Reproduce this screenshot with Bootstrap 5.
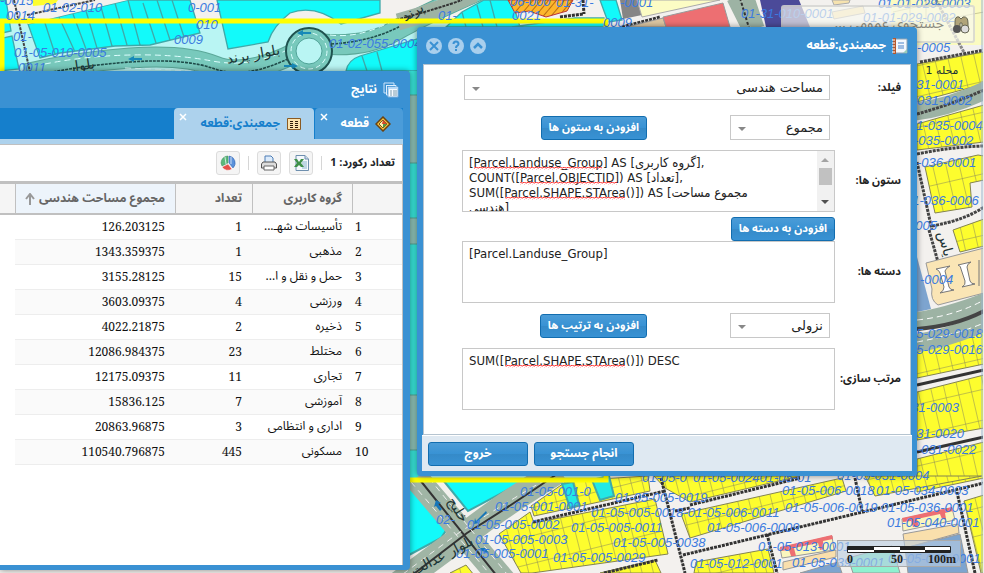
<!DOCTYPE html>
<html lang="fa">
<head>
<meta charset="utf-8">
<meta name="viewport" content="width=device-width, initial-scale=1">
<title>جمعبندی قطعه</title>
<link href="https://cdn.jsdelivr.net/npm/bootstrap@5.3.0/dist/css/bootstrap.min.css" rel="stylesheet">
<style>
:root{--frame:#3a91d3;--edge:#157fcc;--pale:#add2ed;--rule:#c0c0c0}
body{font-family:"Noto Sans Arabic","DejaVu Sans Condensed","DejaVu Sans",sans-serif;font-size:12px;line-height:16px;min-height:100vh;overflow:hidden;background:#f3f1ee}
svg{display:block}
.map-canvas{position:absolute;inset:0;width:100%;height:100%}
.map-code{font:italic 13px "Liberation Sans",sans-serif;fill:#3b7be0}
.map-name{font:14px "DejaVu Sans",sans-serif;fill:#1c3434}
.win{position:absolute;background:var(--frame);box-shadow:0 0 6px rgba(0,0,0,.45)}
.results{left:0;top:71px;bottom:3px;width:410px;padding:0 7px 5px 0;border-radius:0 4px 4px 0;z-index:2}
.summary{left:417px;top:27px;width:500px;padding:0 5px 5px;border-radius:4px;z-index:3}
.win-title{height:37px;color:#fff;font-weight:700;gap:6px}
.tool-btn{border:0;background:none;padding:0;width:16px;height:16px}
.tabstrip{background:#157fcc;height:31px}
.tab-btn{border:0;position:relative;color:#fff;font-weight:700;background:#4b9cd9;padding:0 12px 0 0;border-radius:4px 4px 0 0;height:31px;gap:6px}
.tab-btn.tab-on{background:var(--pale);color:#157fcc;margin-right:1px}
.tab-parcel{width:88px}.tab-sum{width:140px}
.tab-x{position:absolute;left:5px;top:5px}
.tab-base{height:6px;background:var(--pale);border-bottom:1px solid var(--rule)}
.results-body{background:#fff;border-right:1px solid var(--rule)}
.toolbar-line{height:36px;padding-right:7px;font-size:11px}
.icon-btn{width:24px;height:24px;border:1px solid #dcdcdc;border-radius:3px;background:#f5f5f5;padding:0}
.tb-sep{width:1px;height:14px;background:#d6d6d6}
.grid{table-layout:fixed;width:100%;border-collapse:separate;border-spacing:0}
.grid th{height:34px;border-top:3px solid var(--rule);border-bottom:2px solid var(--rule);border-left:1px solid var(--rule);background:#f5f5f5;color:#666;padding:0 10px;font-weight:700;white-space:nowrap}
.grid th:last-child{border-left:0}
.grid th.sorted{background:#edf4fb}
.grid td{height:25px;padding:0 10px;border-bottom:1px solid #ededed;overflow:hidden;white-space:nowrap;color:#111;font-size:12px}
.grid tr:nth-child(even) td{background:#fafafa}
.grid td:last-child,.grid tr:nth-child(even) td:last-child{border:0;background:#fff}
.grid td.num{font-family:"Noto Serif","Liberation Serif",serif}
.grid td.idx{direction:ltr;text-align:left;padding:0 3px}
.form-body{background:#fff;border:1px solid #b5c4d0;margin:0 1px;padding:10px 9px 24px 38px}
.line{display:grid;grid-template-columns:66px minmax(0,1fr);align-items:center}
.line label{font-weight:700;font-size:11px;color:#222;white-space:nowrap}
.line-inset{padding:0 5px 0 2px}
.line-columns{margin:15px 0 10px}
.line-sort{margin:10px 0}
.line-group{margin-top:5px}
.pick{height:25px;border:1px solid #c8c8c8;border-radius:0;padding:0 6px 0 24px;font:13px/22px "DejaVu Sans",sans-serif;color:#222;background:#fff url("data:image/svg+xml,%3Csvg xmlns='http://www.w3.org/2000/svg' width='8' height='4'%3E%3Cpath d='M0 0h8L4 4z' fill='%23888'/%3E%3C/svg%3E") no-repeat 7px 11px;background-size:8px 4px}
.pick-short{width:100px}
.act{height:24px;border:1px solid #126daf;border-radius:3px;color:#fff;font-weight:700;font-size:11px;line-height:16px;padding:0 7px;background:linear-gradient(#4b9cd7,#3892d4 50%,#358ac8 51%,#3892d4);white-space:nowrap}
.add-btn{margin-right:83px}
.act-foot{width:100px;font-size:12px}
.area-box{position:relative;border:1px solid #c8c8c8;height:62px;background:#fff}
.area-box textarea{border:0;border-radius:0;width:100%;height:60px;resize:none;padding:4px 6px;overflow:hidden;font:13px/15px "DejaVu Sans Condensed","DejaVu Sans",sans-serif;color:#222;direction:ltr;text-align:left;background:none;display:block;outline:0}
.area-box .squiggle{position:absolute;left:0;top:0;width:100%;height:100%;pointer-events:none}
.scroller{width:17px;background:#f1f1f1;flex:none}
.foot{background:#dfe9f2;height:36px;padding:0 6px;border-top:1px solid #fff;gap:6px}
.search-box{position:absolute;right:9px;top:5px;width:194px;height:38px;background:rgba(248,248,240,.68);border:2px solid rgba(190,190,190,.5);border-radius:3px;padding:0 3px 0 6px;z-index:1}
.search-box input{border:0;background:none;width:140px;font-size:14px;color:#777;outline:0}
.search-box input::placeholder{color:#8b8b80}
.scale-box{position:absolute;right:23px;bottom:6px;width:124px;height:27px;background:rgba(185,205,225,.6);border:1px solid #aaa;z-index:1}
.scale-box text{font:bold 12px "Liberation Serif",serif;fill:#222}
</style>
<script src="https://cdn.jsdelivr.net/npm/bootstrap@5.3.0/dist/js/bootstrap.bundle.min.js"></script>
</head>
<body class="position-relative m-0">
<svg class="map-canvas" viewBox="0 0 984 573" preserveAspectRatio="xMinYMin slice" aria-label="نقشه">
<defs>
<pattern id="lots" width="11" height="27" patternUnits="userSpaceOnUse" patternTransform="rotate(-14)"><rect width="11" height="27" fill="#fdfd2e"/><path d="M0 0H11M0 0V27" stroke="#87875a" fill="none"/></pattern>
<pattern id="lotsR" width="13" height="30" patternUnits="userSpaceOnUse" patternTransform="rotate(-13)"><rect width="13" height="30" fill="#fdfd2e"/><path d="M0 0H13M0 0V30" stroke="#87875a" fill="none"/></pattern>
<pattern id="hatch" width="6" height="6" patternUnits="userSpaceOnUse" patternTransform="rotate(40)"><rect width="6" height="6" fill="#fdb62c"/><path d="M0 0V6" stroke="#b96b10" stroke-width="2"/></pattern>
<pattern id="squig" width="4" height="3" patternUnits="userSpaceOnUse"><path d="M0 2L1 1L3 2L4 2" stroke="#f33" fill="none"/></pattern>
</defs>
<rect width="984" height="573" fill="#f3f1ee"/>
<!-- selected district -->
<rect x="0" y="21" width="606" height="459" fill="#b9f5f3"/>
<g fill="#12fafa" stroke="#3fa9a9" stroke-width="1.3">
<path d="M28 24L128 0H190L200 33L150 45L115 46L60 53L40 58ZM44 20L55 54M59 17L75 52M73 14L86 49M86 11L97 48M101 7L112 46M115 3L127 45M128 0L140 45M143 3L156 43M157 0L170 40M172 0L184 37"/>
<path d="M217 0L228 49L268 42Q273 26 290 13Q315 4 341 24L380 13V0Z"/>
<path d="M346 71Q348 60 360 56L420 38V71ZM362 56L367 71M377 52L382 71"/>
<path d="M-2 0H6L11 31L-2 34ZM-2 39L12 36L19 69L-2 71Z"/>
<path d="M446 27L462 12L484 0H512L520 27ZM462 12L466 27M477 5L483 27M490 0L497 27"/>
<path d="M512 27L575 18H604V27Z"/>
<path d="M600 0L608 22L622 20L616 0Z"/>
</g>
<path d="M0 0H10L28 24L128 0H30L24 12L14 0Z" fill="#f3f1ee"/>
<path d="M409 71H420V480H409Z" fill="#38e8dc"/><path d="M409 95h10v68h-10M409 218h10v26h-10M409 395h10v55h-10" fill="#8fc4b8" stroke="#56a697"/>
<g fill="none"><path d="M25 74Q75 62 130 58T215 66T295 53M322 44Q365 48 395 31T480 -10" stroke="#5ba899" stroke-width="21"/><path d="M25 74Q75 62 130 58T215 66T295 53M322 44Q365 48 395 31T480 -10" stroke="#78c9bc" stroke-width="19"/>
<path d="M30 77Q75 66 130 62T215 69T292 57M331 44Q365 42 390 31T480 -12" stroke="#1f4c4a" stroke-width="1.6" stroke-dasharray="3 1"/><path d="M45 64Q85 56 130 55T212 61T285 51M330 35Q355 38 382 26T450 -5M125 68Q180 70 220 73" stroke="#dff" stroke-dasharray="6 4"/></g>
<circle cx="309" cy="51" r="23" fill="#78c9bc" stroke="#1f5350" stroke-width="2"/><circle cx="309" cy="51" r="18" fill="none" stroke="#dff" stroke-dasharray="5 3"/><circle cx="309" cy="51" r="13" fill="#b9f5f3" stroke="#4fa297"/>
<path d="M14 0L30 72M27 15L95 0" stroke="#444" stroke-width="2" stroke-dasharray="3 1"/>
<path d="M128 59l6-3v2h8v2h-8v2zM297 33l6-3v2h8v2h-8v2zM298 66l-6-3v2h-8v2h8v2z" fill="#1789b8"/>
<path d="M33 0H58L55 4L33 6Z" fill="#fdfd2e"/>
<path d="M398 22Q435 12 474 -6" stroke="#9db3a4" stroke-width="17" fill="none"/><path d="M396 20Q440 8 462 0" stroke="#333" stroke-width="2" stroke-dasharray="3 1" fill="none"/>
<path d="M508 0H573L567 11L546 17L529 11L515 13Z" fill="url(#hatch)" stroke="#b33"/>
<path d="M560 17L583 14M583 0L584 14M622 27L660 17" stroke="#333" stroke-width="3" stroke-dasharray="3 1"/>
<path d="M620 0H637L642 15L623 19Z" fill="#858585"/><path d="M637 0H720L642 17Z" fill="#fcfcc4" stroke="#aaa"/>
<path d="M627 27L663 18L666 27Z" fill="#dcc6a2" stroke="#999"/><path d="M663 17L723 3L730 27H666Z" fill="#ed6f72" stroke="#999"/>
<path d="M733 -2L748 28M748 -2L758 28" stroke="#9db3a4" stroke-width="13"/><path d="M740 -2L749 28" stroke="#333" stroke-width="2" stroke-dasharray="3 2"/>
<path d="M760 0H799L810 27H766Z" fill="#4b4a99"/><path d="M832 0H850L849 3L834 5ZM832 12L863 6L865 13L834 19Z" fill="#f6e3af" stroke="#aaa"/><path d="M891 0H984V45H891Z" fill="#fbfbc0"/><path d="M936 0L967 58" stroke="#888" stroke-width="3" stroke-dasharray="3 1"/>
<path d="M893 12L984 -8M893 29L984 12M910 0V27M926 0V20" stroke="#c9c996"/>
<!-- eastern blocks -->
<g fill="url(#lotsR)" stroke="#84844f"><path d="M917 64L984 52V84L917 102Z"/><path d="M917 124L984 105V142L917 150Z"/><path d="M925 167L978 155L984 156V180L970 183L972 207L935 213Z"/><path d="M953 230L984 219V246L960 252Z"/><path d="M917 350L984 326V364L917 378Z"/><path d="M917 392L984 375V428L917 440Z"/><path d="M917 459L984 442V478L917 492Z"/></g>
<path d="M912 112Q950 108 990 88" stroke="#9db3a4" stroke-width="18" fill="none"/><g stroke="#444" stroke-width="3" stroke-dasharray="3 1" fill="none"><path d="M917 114Q950 105 984 90M917 154Q950 147 984 146M920 62L984 50M917 162L932 230M932 226Q965 220 984 207M929 230L938 262"/></g>
<path d="M926 263L984 248V293L938 305Q930 300 932 289Z" fill="#fae5b5" stroke="#999"/><path d="M917 257L931 309L917 312Z" fill="#7da4cf"/>
<path d="M910 322Q945 318 990 300M910 344Q945 340 990 320" stroke="#9db3a4" stroke-width="18" fill="none"/><path d="M917 329Q955 326 984 311" stroke="#444" stroke-width="4" fill="none"/><path d="M917 320Q955 316 984 300M917 342Q955 335 984 323" stroke="#fff" stroke-dasharray="6 4" fill="none"/>
<path d="M936 269l14-3q-4 2-5 5l4 16q1 3 5 3l-14 3q4-2 4-6l-4-14q-1-3-4-4M958 265l13-3q-4 2-4 5l3 14q1 3 5 3l-13 3q4-2 3-6l-4-12q0-3-3-4M979 260v26" fill="#fff" stroke="#777"/>
<path d="M917 385L984 370M917 452L984 437" stroke="#333" stroke-width="3"/>
<!-- southern blocks -->
<path d="M409 480L449 526L441 538L409 555ZM443 480L468 511L526 480Z" fill="#12fafa" stroke="#3fa9a9" stroke-width="2"/>
<path d="M416 478L508 586M398 584L467 533Q510 500 560 470" stroke="#a0b5a5" stroke-width="25" fill="none"/><path d="M420 480L505 586M398 586L467 533Q515 503 560 472" stroke="#333" stroke-width="2" fill="none"/><path d="M411 482L500 586M429 478L515 584M403 574L460 532Q510 500 545 480" stroke="#eee" stroke-dasharray="6 5" fill="none"/>
<path d="M436 500l-2 7 2-1 4 5 2-2-4-5 3-1zM486 511l-10 10-1-3-1 6 5-1-2-1 10-9zM475 540l4 8 6 0 4 5-7-2z" fill="#1675b8"/>
<g fill="url(#lots)" stroke="#84844f"><path d="M531 506L567 481L648 476L650 491L534 516Z"/><path d="M499 534L530 512L534 523L655 499L668 554L532 573H521Z"/><path d="M654 476H800L690 502L665 488Z"/><path d="M681 514L842 478L846 491L690 538Z"/><path d="M696 562L768 549L774 573H694Z"/><path d="M865 476H982L875 496Z"/><path d="M964 501L984 495V573H981Z"/><path d="M450 573L466 565L474 575Z"/><path d="M600 573L655 560L661 573Z"/></g>
<path d="M562 484L570 508L579 505L573 482ZM592 480L600 500L614 496L609 476Z" fill="#22e9e5" stroke="#3fa9a9" stroke-width="2"/>
<g stroke="#333" stroke-width="3" stroke-dasharray="3 1" fill="none"><path d="M533 522L665 491M661 478L685 573M604 573L658 560M683 555L984 483M690 505L800 478M675 511L690 508M855 478L862 511M767 534L777 573M957 492L975 573"/></g>
<g stroke="#999"><path d="M780 548L832 536L834 550L782 558Z" fill="#faf6bd"/><path d="M783 562L836 550V557L783 570Z" fill="#f9dfac"/><path d="M902 519L952 508L955 520L903 531Z" fill="#faf6bd"/><path d="M903 534L958 524L959 533L905 548Z" fill="#f9dfac"/><path d="M905 548L960 534L968 573H908Z" fill="#7da4cf"/><path d="M800 573L838 562L842 573Z" fill="#7da4cf"/><path d="M848 558L892 546L900 573H853Z" fill="#8ff1d0"/></g>
<path d="M780 547L832 535L833 539L823 541L824 549L820 550L818 543L794 548L796 556L791 556L789 550L781 551ZM902 518L952 507L953 511L945 513L946 519L942 519L940 514L917 519L919 526L913 527L911 521L903 522Z" fill="#ed6f72"/>
<path d="M0 21H606V28M606 476V480H409M2 21V75" fill="none" stroke="#ff0" stroke-width="5"/>
<g class="map-code">
<text x="0" y="5">-0015</text><text x="43" y="12">01-02-010</text><text x="188" y="12">0-001</text><text x="6" y="20">0014</text><text x="196" y="29">010</text><text x="13" y="41">01-</text><text x="174" y="44">0009</text><text x="14" y="57">01-05-010-0005</text><text x="18" y="72">0011</text><text x="329" y="48">01-02-055-0004</text>
<text x="438" y="20">01-</text><text x="510" y="6">06-000</text><text x="512" y="20">0021</text><text x="556" y="7">01-31-</text><text x="620" y="7">-0001</text><text x="603" y="27">0009</text><text x="741" y="18">01-31-010-0001</text><text x="878" y="8">01-01-029-0003</text><text x="863" y="22">01-01-029-0002</text>
<text x="917" y="52">-0005</text><text x="909" y="89">031-0001</text><text x="917" y="105">031-0002</text><text x="909" y="130">01-035-0004</text><text x="914" y="145">-035-0002</text><text x="917" y="167">-036-0001</text><text x="905" y="205">01-036-0006</text><text x="908" y="230">0005</text><text x="920" y="284">-0004</text><text x="909" y="338">05-029-0018</text><text x="909" y="354">05-029-0016</text><text x="904" y="412">031-0003</text><text x="909" y="438">031-0020</text><text x="917" y="454">-031-0022</text>
<text x="520" y="496">01-05-001-0</text><text x="495" y="511">01-05-001-0001</text><text x="615" y="502">01-05-005-0019</text><text x="591" y="517">01-05-005-0018-01-05-006-0011</text><text x="467" y="529">01-05-005-0002</text><text x="571" y="532">01-05-005-0011</text><text x="475" y="544">01-05-005-0003</text><text x="613" y="547">01-05-005-0038</text><text x="456" y="558">01-05-005-0001</text><text x="553" y="562">01-05-005-0029</text><text x="642" y="482">01-05-0</text>
<text x="782" y="495">01-05-006-0018</text><text x="876" y="495">01-05-034-0003</text><text x="785" y="512">01-05-006-0019</text><text x="881" y="512">01-05-036-0001</text><text x="707" y="532">01-05-006-0009</text><text x="887" y="527">01-05-040-0001</text><text x="758" y="551">01-05-013-0001</text><text x="690" y="568">01-05-012-0001</text><text x="792" y="567">01-05-039-0001</text><text x="888" y="563">01-05-060-0001</text><text x="693" y="482">01-05-002401-05-01</text><text x="837" y="480">01-05-031-0004</text><text x="436" y="524">02-</text>
</g>
<g class="map-name" text-anchor="middle"><text transform="translate(254 59) rotate(-10)">بلوار پرند</text><text transform="translate(415 16) rotate(-30)">پرند</text><text transform="translate(82 70) rotate(-8)">بلوار</text><text transform="translate(942 74)" style="font-size:11px">محله 1</text><text transform="translate(941 245) rotate(75)">یاس</text><text transform="translate(444 560) rotate(-28)">بلوار عدالت</text><text transform="translate(454 512) rotate(58)">خلیج</text></g>
<path d="M982 0V573" stroke="#9bb6cf"/><path d="M983.500 0V573" stroke="#eee"/>
</svg>

<form class="search-box d-flex align-items-center justify-content-between" dir="rtl">
<svg width="18" height="20" viewBox="0 0 18 20" aria-hidden="true"><path d="M3 8Q3 2 7 3L9 5L11 3Q16 2 16 9V15H10V9H8V15H3Z" fill="#b0a47a" stroke="#665"/><ellipse cx="5" cy="15" rx="4" ry="4" fill="#555"/><ellipse cx="13" cy="15" rx="4" ry="4" fill="#ddd" stroke="#665"/></svg>
<input type="search" placeholder="جستجوی عمومی ..." aria-label="جستجوی عمومی" class="me-2 p-0 flex-grow-1">
</form>

<div class="scale-box"><svg width="122" height="25" viewBox="0 0 122 25"><path d="M9.500 5.500H112.500V11.500H9.500Z" fill="#fff" stroke="#222"/><path d="M10 6H36V9H10ZM62 6H87V9H62ZM36 9H62V11H36ZM87 9H112V11H87Z" fill="#222"/><text x="9" y="22">0</text><text x="53" y="22">50</text><text x="90" y="22">100m</text></svg></div>

<section class="win results d-flex flex-column" dir="rtl">
<header class="win-title d-flex align-items-center pe-1">
<svg width="16" height="16" viewBox="0 0 16 16"><path d="M1 1H11V3M1 1V11H3" fill="none" stroke="#cfe5fa"/><path d="M3 3.500H13V5M3.500 3V13H5" fill="none" stroke="#dff0ff"/><path d="M5 5H15V15H5Z" fill="#f5faff" stroke="#7db0dc"/><path d="M5 5H15V7H5Z" fill="#b8d9f6"/><path d="M7 9H9M10 9H14M7 11H9M10 11H14M7 13H9M10 13H14" stroke="#7c9eb0"/></svg>
<span>نتایج</span></header>
<div class="tabstrip d-flex" role="tablist">
<button class="tab-btn tab-parcel d-flex align-items-center" role="tab" type="button"><svg width="16" height="16" viewBox="0 0 16 16"><path d="M8 1L15 8L8 15L1 8Z" fill="#f5c13c" stroke="#6b4310" stroke-width="1.500"/><path d="M8 4L12 8L8 12L4 8Z" fill="#fff2b0" stroke="#7a5522"/><path d="M8 4L12 8H7Z" fill="#d5472b"/><path d="M8 12L12 8H8Z" fill="#4f9a48"/></svg><span>قطعه</span><svg class="tab-x" width="8" height="8" viewBox="0 0 8 8"><path d="M1 1L7 7M7 1L1 7" stroke="#fff" stroke-width="1.500"/></svg></button>
<button class="tab-btn tab-on tab-sum d-flex align-items-center" role="tab" aria-selected="true" type="button"><svg width="16" height="12" viewBox="0 0 16 12"><path d="M1.500.5H14.500V11.500H1.500Z" fill="#fbe3ae" stroke="#8a5a22"/><path d="M4 3.500H7M9 3.500H12M4 5.500H7M9 5.500H12M4 7.500H7M9 7.500H12M4 9.500H7M9 9.500H12" stroke="#2d1b08"/></svg><span>جمعبندی:قطعه</span><svg class="tab-x" width="8" height="8" viewBox="0 0 8 8"><path d="M1 1L7 7M7 1L1 7" stroke="#fff" stroke-width="1.500"/></svg></button>
</div>
<div class="tab-base"></div>
<div class="results-body flex-grow-1">
<div class="toolbar-line d-flex align-items-center gap-2">
<strong>تعداد رکورد: 1</strong><span class="tb-sep"></span>
<button class="icon-btn d-flex align-items-center justify-content-center" type="button" aria-label="Excel"><svg width="16" height="16" viewBox="0 0 16 16"><path d="M3 .5H12L15.500 4V15.500H3Z" fill="#f4f8fc" stroke="#6e8fae"/><path d="M12 .5V4H15" fill="#cde" stroke="#6e8fae"/><path d="M9 7H14M9 9H14M9 11H14M9 13H14" stroke="#88b3c8"/><path d="M1 4L4 4L6 7L8 4H11L8 8L11 12H8L6 10L4 12H1L4 8Z" fill="#3e8f48"/></svg></button>
<button class="icon-btn d-flex align-items-center justify-content-center" type="button" aria-label="چاپ"><svg width="16" height="16" viewBox="0 0 16 16"><path d="M4 8V1H10L12 3V8" fill="#dcebfb" stroke="#4d7db5"/><path d="M2 7H14L15.500 9V13H.5V9Z" fill="#ddd" stroke="#555"/><path d="M3 11H13V15H3Z" fill="#fff" stroke="#666"/></svg></button>
<span class="tb-sep"></span>
<button class="icon-btn d-flex align-items-center justify-content-center" type="button" aria-label="نمودار"><svg width="16" height="16" viewBox="0 0 16 16"><path d="M8 8V1A7 7 0 0 0 1 8L2 11Z" fill="#5bb87b" stroke="#358754" stroke-width=".5"/><path d="M9 8V1A7 7 0 0 1 13 13Z" fill="#5c92db" stroke="#2b5cab" stroke-width=".5"/><path d="M8 9L12 14A7 7 0 0 1 2 12Z" fill="#e64f49" stroke="#fff" stroke-width=".5"/><path d="M11 2V9M5 2L6 9" stroke="#fff" stroke-width=".7"/></svg></button>
</div>
<table class="grid">
<colgroup><col style="width:50px"><col style="width:100px"><col style="width:77px"><col style="width:160px"><col></colgroup>
<thead><tr><th></th><th>گروه کاربری</th><th>تعداد</th><th class="sorted"><span class="d-flex align-items-center gap-1">مجموع مساحت هندسی<svg class="flex-shrink-0" width="10" height="12" viewBox="0 0 10 12"><path d="M5 12V2M1 6L5 1L9 6" fill="none" stroke="#999" stroke-width="2"/></svg></span></th><th class="p-0"></th></tr></thead>
<tbody>
<tr><td class="num idx">1</td><td>تأسیسات شهـ...</td><td class="num">1</td><td class="num">126.203125</td><td></td></tr>
<tr><td class="num idx">2</td><td>مذهبی</td><td class="num">1</td><td class="num">1343.359375</td><td></td></tr>
<tr><td class="num idx">3</td><td>حمل و نقل و ا...</td><td class="num">15</td><td class="num">3155.28125</td><td></td></tr>
<tr><td class="num idx">4</td><td>ورزشی</td><td class="num">4</td><td class="num">3603.09375</td><td></td></tr>
<tr><td class="num idx">5</td><td>ذخیره</td><td class="num">2</td><td class="num">4022.21875</td><td></td></tr>
<tr><td class="num idx">6</td><td>مختلط</td><td class="num">23</td><td class="num">12086.984375</td><td></td></tr>
<tr><td class="num idx">7</td><td>تجاری</td><td class="num">11</td><td class="num">12175.09375</td><td></td></tr>
<tr><td class="num idx">8</td><td>آموزشی</td><td class="num">7</td><td class="num">15836.125</td><td></td></tr>
<tr><td class="num idx">9</td><td>اداری و انتظامی</td><td class="num">3</td><td class="num">20863.96875</td><td></td></tr>
<tr><td class="num idx">10</td><td>مسکونی</td><td class="num">445</td><td class="num">110540.796875</td><td></td></tr>
</tbody></table>
</div>
</section>

<section class="win summary" dir="rtl">
<header class="win-title d-flex align-items-center px-1">
<svg width="16" height="16" viewBox="0 0 16 16"><path d="M2 1H15V15H2Z" fill="#f4f8fd" stroke="#8ea3b5"/><path d="M1 0H4V16H1Z" fill="#b4582e"/><path d="M0 2H3M0 5H3M0 8H3M0 11H3M0 14H3" stroke="#fff"/><path d="M6 5H12M6 8H12M6 10H12" stroke="#4b82c9"/><path d="M11 15L15 11V15Z" fill="#9cb"/></svg>
<span class="flex-grow-1">جمعبندی:قطعه</span>
<button class="tool-btn" type="button" aria-label="جمع کردن"><svg width="16" height="16" viewBox="0 0 16 16"><circle cx="8" cy="8" r="8" fill="#a9cfed"/><path d="M4 10L8 6L12 10" fill="none" stroke="#3a91d3" stroke-width="2.500"/></svg></button>
<button class="tool-btn" type="button" aria-label="راهنما"><svg width="16" height="16" viewBox="0 0 16 16"><circle cx="8" cy="8" r="8" fill="#a9cfed"/><path d="M5.500 6Q5.500 3.500 8 3.500T10.500 6Q10.500 7 9 8Q8 8.500 8 10M8 11V13" fill="none" stroke="#3a91d3" stroke-width="2"/></svg></button>
<button class="tool-btn" type="button" aria-label="بستن"><svg width="16" height="16" viewBox="0 0 16 16"><circle cx="8" cy="8" r="8" fill="#a9cfed"/><path d="M4 4L12 12M12 4L4 12" stroke="#3a91d3" stroke-width="2"/></svg></button>
</header>
<div class="form-body">
<div class="line"><label for="field">فیلد:</label><div class="line-inset"><select id="field" class="form-select pick"><option>مساحت هندسی</option></select></div></div>
<div class="line line-columns"><span></span><div class="line-inset d-flex align-items-center"><select class="form-select pick pick-short" aria-label="تابع"><option>مجموع</option></select><button class="act add-btn" type="button">افزودن به ستون ها</button></div></div>
<div class="line"><label for="cols">ستون ها:</label><div class="area-box d-flex" dir="ltr"><textarea id="cols" spellcheck="false">[Parcel.Landuse_Group] AS [گروه کاربری],
COUNT([Parcel.OBJECTID]) AS [تعداد],
SUM([Parcel.SHAPE.STArea()]) AS [مجموع مساحت
هندسی]</textarea><svg class="scroller" width="17" height="60" viewBox="0 0 17 60"><path d="M4 11L8 7L12 11Z" fill="#a3a3a3"/><path d="M2 17H15V34H2Z" fill="#c1c1c1"/><path d="M4 49L8 53L12 49Z" fill="#505050"/></svg>
<svg class="squiggle"><path d="M11 16h128v3H11zM57 31h97v3H57zM42 46h120v3H42z" fill="url(#squig)"/></svg></div></div>
<div class="line line-group"><span></span><div><button class="act d-block" type="button">افزودن به دسته ها</button></div></div>
<div class="line"><label for="groups">دسته ها:</label><div class="area-box"><textarea id="groups" spellcheck="false">[Parcel.Landuse_Group]</textarea></div></div>
<div class="line line-sort"><span></span><div class="line-inset d-flex align-items-center"><select class="form-select pick pick-short" aria-label="ترتیب"><option>نزولی</option></select><button class="act add-btn" type="button">افزودن به ترتیب ها</button></div></div>
<div class="line"><label for="order">مرتب سازی:</label><div class="area-box"><textarea id="order" spellcheck="false">SUM([Parcel.SHAPE.STArea()]) DESC</textarea><svg class="squiggle"><path d="M42 16h120v3H42z" fill="url(#squig)"/></svg></div></div>
</div>
<footer class="foot d-flex align-items-center justify-content-end"><button class="act act-foot" type="button">انجام جستجو</button><button class="act act-foot" type="button">خروج</button></footer>
</section>
</body>
</html>
